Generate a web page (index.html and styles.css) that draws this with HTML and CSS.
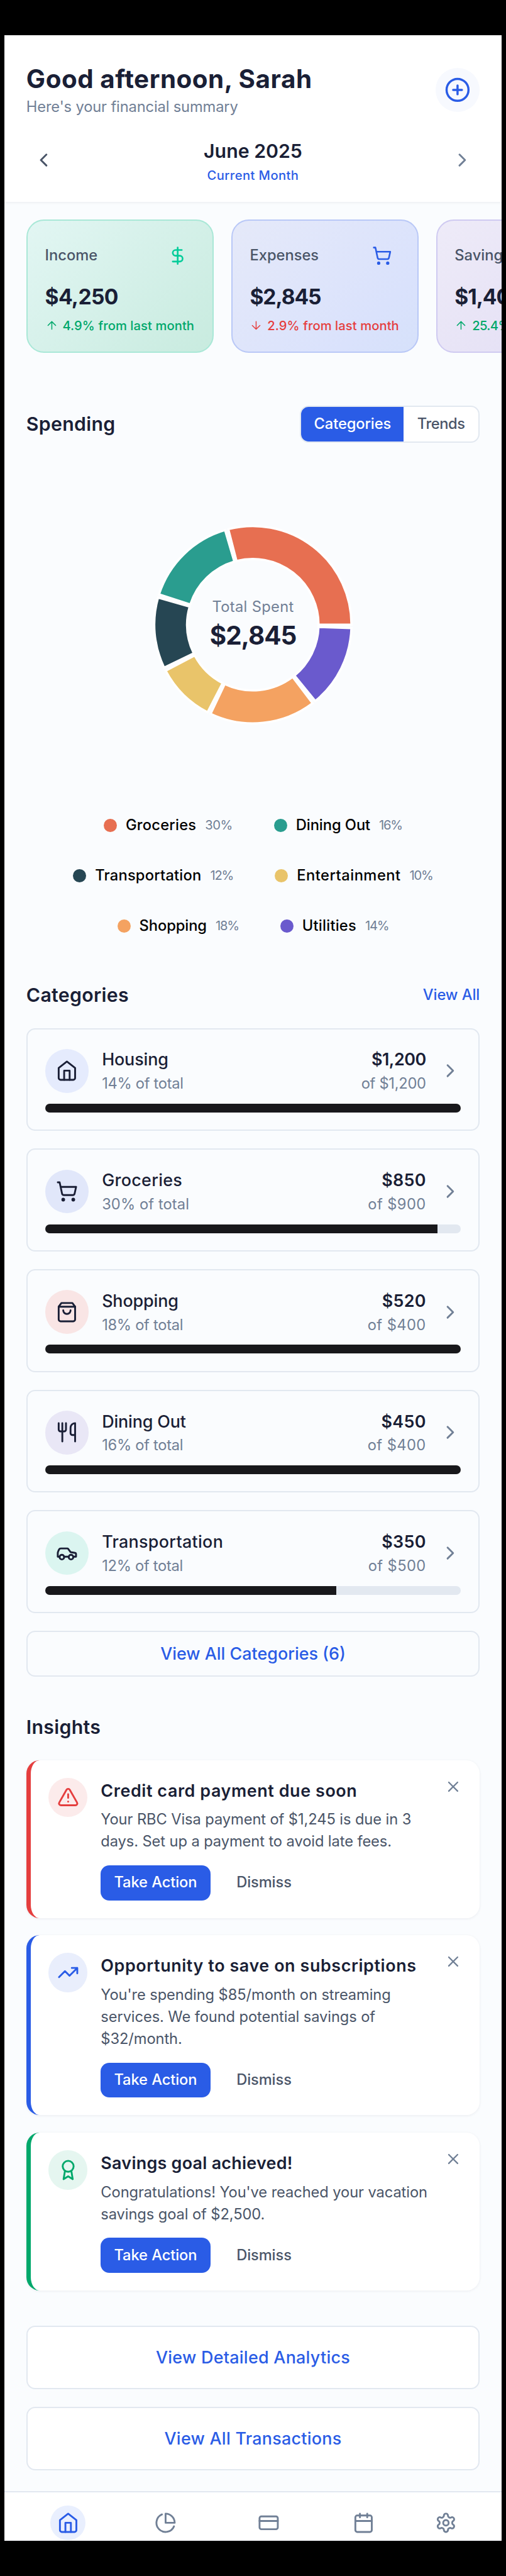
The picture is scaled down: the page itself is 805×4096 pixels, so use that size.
FILE: index.html
```html
<!DOCTYPE html>
<html lang="en">
<head>
<meta charset="utf-8">
<title>Financial summary</title>
<link rel="stylesheet" href="styles.css">
</head>
<body>
<svg class="defs" aria-hidden="true">
  <symbol id="chevron-left" viewBox="0 0 24 24"><path d="m15 18-6-6 6-6"/></symbol>
  <symbol id="chevron-right" viewBox="0 0 24 24"><path d="m9 18 6-6-6-6"/></symbol>
  <symbol id="plus-circle" viewBox="0 0 24 24"><circle cx="12" cy="12" r="10"/><path d="M8 12h8M12 8v8"/></symbol>
  <symbol id="dollar" viewBox="0 0 24 24"><path d="M12 2v20M17 5H9.500a3.500 3.500 0 0 0 0 7h5a3.500 3.500 0 0 1 0 7H6"/></symbol>
  <symbol id="cart" viewBox="0 0 24 24"><circle cx="8" cy="21" r="1"/><circle cx="19" cy="21" r="1"/><path d="M2.050 2.050h2l2.660 12.420a2 2 0 0 0 2 1.580h9.780a2 2 0 0 0 1.950-1.570l1.650-7.430H5.120"/></symbol>
  <symbol id="piggy" viewBox="0 0 24 24"><path d="M3 17l6-6 4 4 8-8M15 7h6v6"/></symbol>
  <symbol id="arrow-up" viewBox="0 0 24 24"><path d="m5 12 7-7 7 7M12 19V5"/></symbol>
  <symbol id="arrow-down" viewBox="0 0 24 24"><path d="M12 5v14M19 12l-7 7-7-7"/></symbol>
  <symbol id="home" viewBox="0 0 24 24"><path d="m3 9 9-7 9 7v11a2 2 0 0 1-2 2H5a2 2 0 0 1-2-2z"/><path d="M9 22V12h6v10"/></symbol>
  <symbol id="bag" viewBox="0 0 24 24"><path d="M6 2 3 6v14a2 2 0 0 0 2 2h14a2 2 0 0 0 2-2V6l-3-4Z"/><path d="M3 6h18M16 10a4 4 0 0 1-8 0"/></symbol>
  <symbol id="utensils" viewBox="0 0 24 24"><path d="M3 2v7c0 1.100.9 2 2 2h4a2 2 0 0 0 2-2V2M7 2v20M21 15V2a5 5 0 0 0-5 5v6c0 1.100.9 2 2 2h3Zm0 0v7"/></symbol>
  <symbol id="car" viewBox="0 0 24 24"><path d="M14 16H9m10 0h3v-3.150a1 1 0 0 0-.84-.99L16 11l-2.700-3.600a1 1 0 0 0-.8-.4H5.240a2 2 0 0 0-1.800 1.100l-.8 1.630A6 6 0 0 0 2 12.420V16h2"/><circle cx="6.500" cy="16.500" r="2.500"/><circle cx="16.500" cy="16.500" r="2.500"/></symbol>
  <symbol id="alert" viewBox="0 0 24 24"><path d="m21.730 18-8-14a2 2 0 0 0-3.480 0l-8 14A2 2 0 0 0 4 21h16a2 2 0 0 0 1.730-3Z"/><path d="M12 9v4M12 17h.01"/></symbol>
  <symbol id="trend" viewBox="0 0 24 24"><path d="m22 7-8.500 8.500-5-5L2 17M16 7h6v6"/></symbol>
  <symbol id="award" viewBox="0 0 24 24"><circle cx="12" cy="8" r="6"/><path d="M15.477 12.890 17 22l-5-3-5 3 1.523-9.110"/></symbol>
  <symbol id="close" viewBox="0 0 24 24"><path d="M18 6 6 18M6 6l12 12"/></symbol>
  <symbol id="pie" viewBox="0 0 24 24"><path d="M21.210 15.890A10 10 0 1 1 8 2.830"/><path d="M22 12A10 10 0 0 0 12 2v10z"/></symbol>
  <symbol id="card" viewBox="0 0 24 24"><rect x="2" y="5" width="20" height="14" rx="2"/><path d="M2 10h20"/></symbol>
  <symbol id="calendar" viewBox="0 0 24 24"><rect x="3" y="4" width="18" height="18" rx="2"/><path d="M16 2v4M8 2v4M3 10h18"/></symbol>
  <symbol id="gear" viewBox="0 0 24 24"><path d="M12.220 2h-.44a2 2 0 0 0-2 2v.18a2 2 0 0 1-1 1.730l-.43.25a2 2 0 0 1-2 0l-.15-.08a2 2 0 0 0-2.730.73l-.22.38a2 2 0 0 0 .73 2.730l.15.1a2 2 0 0 1 1 1.720v.51a2 2 0 0 1-1 1.740l-.15.09a2 2 0 0 0-.73 2.730l.22.38a2 2 0 0 0 2.730.73l.15-.08a2 2 0 0 1 2 0l.43.25a2 2 0 0 1 1 1.730V20a2 2 0 0 0 2 2h.44a2 2 0 0 0 2-2v-.18a2 2 0 0 1 1-1.730l.43-.25a2 2 0 0 1 2 0l.15.08a2 2 0 0 0 2.730-.73l.22-.39a2 2 0 0 0-.73-2.730l-.15-.08a2 2 0 0 1-1-1.740v-.5a2 2 0 0 1 1-1.740l.15-.09a2 2 0 0 0 .73-2.730l-.22-.38a2 2 0 0 0-2.730-.73l-.15.08a2 2 0 0 1-2 0l-.43-.25a2 2 0 0 1-1-1.730V4a2 2 0 0 0-2-2z"/><circle cx="12" cy="12" r="3"/></symbol>
</svg>

<div class="app">
  <header class="header">
    <div class="greeting">
      <div>
        <h1 class="title">Good afternoon, Sarah</h1>
        <p class="subtitle">Here's your financial summary</p>
      </div>
      <button class="add"><svg class="icon i24"><use href="#plus-circle"/></svg></button>
    </div>
    <div class="month">
      <button class="month-btn"><svg class="icon i20"><use href="#chevron-left"/></svg></button>
      <div class="month-label">
        <div class="month-name">June 2025</div>
        <div class="month-note">Current Month</div>
      </div>
      <button class="month-btn next"><svg class="icon i20"><use href="#chevron-right"/></svg></button>
    </div>
  </header>

  <section class="summary">
    <article class="stat income">
      <div class="stat-top"><span class="stat-label">Income</span><span class="stat-icon"><svg class="icon i18"><use href="#dollar"/></svg></span></div>
      <div class="stat-value">$4,250</div>
      <div class="stat-change up"><svg class="icon i12"><use href="#arrow-up"/></svg><span>4.9% from last month</span></div>
    </article>
    <article class="stat expenses">
      <div class="stat-top"><span class="stat-label">Expenses</span><span class="stat-icon"><svg class="icon i18"><use href="#cart"/></svg></span></div>
      <div class="stat-value tight">$2,845</div>
      <div class="stat-change down"><svg class="icon i12"><use href="#arrow-down"/></svg><span>2.9% from last month</span></div>
    </article>
    <article class="stat savings">
      <div class="stat-top"><span class="stat-label">Savings</span><span class="stat-icon"><svg class="icon i18"><use href="#piggy"/></svg></span></div>
      <div class="stat-value tight">$1,405</div>
      <div class="stat-change up"><svg class="icon i12"><use href="#arrow-up"/></svg><span class="slim">25.4% from last month</span></div>
    </article>
  </section>

  <section class="spending">
    <div class="section-head">
      <h2>Spending</h2>
      <div class="toggle"><button class="on">Categories</button><button class="off">Trends</button></div>
    </div>
    <div class="chart">
      <svg class="donut" viewBox="-100 -100 200 200">
        <path fill="#e76f51" d="M90 0A90 90 0 0 0-22.380-87.170L-14.920-58.110A60 60 0 0 1 60 0Z"/>
        <path fill="#2a9d8f" d="M-25.410-86.340A90 90 0 0 0-85.630-27.690L-57.090-18.460A60 60 0 0 1-16.940-57.560Z"/>
        <path fill="#264653" d="M-86.550-24.690A90 90 0 0 0-81 39.230L-54 26.150A60 60 0 0 1-57.700-16.460Z"/>
        <path fill="#e9c46a" d="M-79.580 42.030A90 90 0 0 0-41.360 79.930L-27.570 53.290A60 60 0 0 1-53.060 28.020Z"/>
        <path fill="#f4a261" d="M-38.550 81.330A90 90 0 0 0 54.510 71.610L36.340 47.740A60 60 0 0 1-25.700 54.220Z"/>
        <path fill="#6a5acd" d="M56.980 69.670A90 90 0 0 0 89.950 3.140L59.960 2.090A60 60 0 0 1 37.990 46.440Z"/>
      </svg>
      <div class="total"><span class="total-label">Total Spent</span><span class="total-value">$2,845</span></div>
    </div>
    <div class="legend">
      <div class="legend-row">
        <div class="key"><i class="dot c1"></i><b>Groceries</b><small>30%</small></div>
        <div class="key"><i class="dot c2"></i><b class="flat">Dining Out</b><small class="slim">16%</small></div>
      </div>
      <div class="legend-row">
        <div class="key"><i class="dot c3"></i><b>Transportation</b><small class="slim">12%</small></div>
        <div class="key"><i class="dot c4"></i><b class="loose">Entertainment</b><small class="slim">10%</small></div>
      </div>
      <div class="legend-row">
        <div class="key"><i class="dot c5"></i><b class="flat">Shopping</b><small class="slim">18%</small></div>
        <div class="key"><i class="dot c6"></i><b>Utilities</b><small class="slim">14%</small></div>
      </div>
    </div>
  </section>

  <section class="categories">
    <div class="section-head short"><h2>Categories</h2><a class="link">View All</a></div>
    <article class="cat">
      <div class="cat-row">
        <span class="cat-icon housing"><svg class="icon i20"><use href="#home"/></svg></span>
        <div class="cat-name"><strong class="flat">Housing</strong><span>14% of total</span></div>
        <div class="cat-sum"><strong class="slim">$1,200</strong><span class="flat">of $1,200</span></div>
        <svg class="icon i20 go"><use href="#chevron-right"/></svg>
      </div>
      <div class="bar"><div class="fill" style="width:100%"></div></div>
    </article>
    <article class="cat">
      <div class="cat-row">
        <span class="cat-icon groceries"><svg class="icon i20"><use href="#cart"/></svg></span>
        <div class="cat-name"><strong>Groceries</strong><span class="wide">30% of total</span></div>
        <div class="cat-sum"><strong>$850</strong><span>of $900</span></div>
        <svg class="icon i20 go"><use href="#chevron-right"/></svg>
      </div>
      <div class="bar"><div class="fill" style="width:94.4%"></div></div>
    </article>
    <article class="cat">
      <div class="cat-row">
        <span class="cat-icon shopping"><svg class="icon i20"><use href="#bag"/></svg></span>
        <div class="cat-name"><strong class="flat">Shopping</strong><span>18% of total</span></div>
        <div class="cat-sum"><strong>$520</strong><span>of $400</span></div>
        <svg class="icon i20 go"><use href="#chevron-right"/></svg>
      </div>
      <div class="bar"><div class="fill" style="width:100%"></div></div>
    </article>
    <article class="cat">
      <div class="cat-row">
        <span class="cat-icon dining"><svg class="icon i20"><use href="#utensils"/></svg></span>
        <div class="cat-name"><strong class="flat">Dining Out</strong><span>16% of total</span></div>
        <div class="cat-sum"><strong>$450</strong><span>of $400</span></div>
        <svg class="icon i20 go"><use href="#chevron-right"/></svg>
      </div>
      <div class="bar"><div class="fill" style="width:100%"></div></div>
    </article>
    <article class="cat">
      <div class="cat-row">
        <span class="cat-icon transport"><svg class="icon i20"><use href="#car"/></svg></span>
        <div class="cat-name"><strong>Transportation</strong><span>12% of total</span></div>
        <div class="cat-sum"><strong>$350</strong><span>of $500</span></div>
        <svg class="icon i20 go"><use href="#chevron-right"/></svg>
      </div>
      <div class="bar"><div class="fill" style="width:70%"></div></div>
    </article>
    <button class="all-cats">View All Categories (6)</button>
  </section>

  <section class="insights">
    <h2>Insights</h2>
    <article class="insight danger">
      <span class="badge"><svg class="icon i20"><use href="#alert"/></svg></span>
      <div class="insight-body">
        <h3>Credit card payment due soon</h3>
        <p>Your RBC Visa payment of $1,245 is due in 3<br>days. Set up a payment to avoid late fees.</p>
        <div class="actions"><button class="take">Take Action</button><button class="dismiss">Dismiss</button></div>
      </div>
      <svg class="icon i16 close"><use href="#close"/></svg>
    </article>
    <article class="insight info">
      <span class="badge"><svg class="icon i20"><use href="#trend"/></svg></span>
      <div class="insight-body">
        <h3>Opportunity to save on subscriptions</h3>
        <p>You're spending $85/month on streaming<br>services. We found potential savings of<br>$32/month.</p>
        <div class="actions"><button class="take">Take Action</button><button class="dismiss">Dismiss</button></div>
      </div>
      <svg class="icon i16 close"><use href="#close"/></svg>
    </article>
    <article class="insight success">
      <span class="badge"><svg class="icon i20"><use href="#award"/></svg></span>
      <div class="insight-body">
        <h3 class="snug">Savings goal achieved!</h3>
        <p>Congratulations! You've reached your vacation<br>savings goal of $2,500.</p>
        <div class="actions"><button class="take">Take Action</button><button class="dismiss">Dismiss</button></div>
      </div>
      <svg class="icon i16 close"><use href="#close"/></svg>
    </article>
  </section>

  <section class="shortcuts">
    <button>View Detailed Analytics</button>
    <button>View All Transactions</button>
  </section>

  <nav class="nav">
    <a class="active"><svg class="icon i20"><use href="#home"/></svg></a>
    <a class="n-pie"><svg class="icon i20"><use href="#pie"/></svg></a>
    <a class="n-card"><svg class="icon i20"><use href="#card"/></svg></a>
    <a class="n-cal"><svg class="icon i20"><use href="#calendar"/></svg></a>
    <a class="n-gear"><svg class="icon i20"><use href="#gear"/></svg></a>
  </nav>
</div>
</body>
</html>
```
FILE: styles.css
```css
/* 1rem is ten layout units */
html { font-size: 17.428px; background: #000; }
* { box-sizing: border-box; margin: 0; padding: 0; }
body {
  background: #000;
  padding: 3.2rem 0.4rem 0 0.4rem;
  height: 4096px;
  overflow: hidden;
  font-family: Inter, "Liberation Sans", sans-serif;
  font-size: 1.36rem;
  line-height: 2rem;
  color: #1a1f36;
}
button { font: inherit; letter-spacing: inherit; border: 0; background: none; color: inherit; }
svg { display: block; flex: none; }
.defs { position: absolute; width: 0; height: 0; }
.icon { fill: none; stroke: currentColor; stroke-width: 2; stroke-linecap: round; stroke-linejoin: round; overflow: visible; }
.i12 { width: 1.2rem; height: 1.2rem; }
.i16 { width: 1.6rem; height: 1.6rem; }
.i18 { width: 1.8rem; height: 1.8rem; }
.i20 { width: 2rem; height: 2rem; }
.i24 { width: 2.4rem; height: 2.4rem; }

.app { height: 228.6rem; background: #fafcfe; overflow: hidden; display: flex; flex-direction: column; }
h2 { font-size: 1.737rem; line-height: 2.8rem; font-weight: 600; letter-spacing: 0.01em; }

/* Header */
.header { height: 15.2rem; flex: none; padding: 2.4rem 2rem 0; background: #fff; box-shadow: 0 1px 4px rgba(26, 31, 54, 0.08); }
.greeting { display: flex; justify-content: space-between; align-items: center; height: 5.2rem; }
.title { font-size: 2.316rem; line-height: 3.2rem; font-weight: 700; letter-spacing: 0.013em; }
.subtitle { color: #718096; letter-spacing: -0.006em; }
.add { width: 4rem; height: 4rem; border-radius: 50%; background: #f7f9fe; color: #2a5ce6; display: grid; place-items: center; }
.month { margin-top: 1.6rem; height: 4.4rem; display: flex; justify-content: space-between; align-items: center; text-align: center; }
.month-btn { width: 3.2rem; height: 3.2rem; display: grid; place-items: center; color: #4a5568; }
.month-btn.next { color: #718096; }
.month-name { font-size: 1.737rem; line-height: 2.8rem; font-weight: 600; }
.month-note { font-size: 1.158rem; line-height: 1.6rem; font-weight: 500; letter-spacing: 0.021em; color: #2a5ce6; }

/* Summary cards */
.summary { display: flex; gap: 1.6rem; padding: 1.6rem 0 0 2rem; overflow: hidden; flex: none; }
.stat { flex: none; width: 17.1rem; height: 12.2rem; border: 2px solid; border-radius: 1.6rem; padding: 1.6rem 1.59rem; }
.income { background: linear-gradient(135deg, #e2f6f3, #c8ebdf); border-color: #a9e8d7; }
.expenses { background: linear-gradient(135deg, #e5e9f9, #dae2fc 75%, #d6e1fa); border-color: #b9c8f7; }
.savings { background: linear-gradient(135deg, #eeebf8, #e1dcf4); border-color: #cfcaf1; }
.stat-top { height: 3.2rem; display: flex; justify-content: space-between; align-items: center; }
.stat-label { color: #4a5568; font-weight: 500; letter-spacing: 0; }
.stat-icon { width: 3.2rem; height: 3.2rem; display: grid; place-items: center; }
.income .stat-icon { color: #00cc99; }
.expenses .stat-icon { color: #2a5ce6; }
.savings .stat-icon { color: #6a5acd; }
.stat-value { margin-top: 0.8rem; font-size: 1.93rem; line-height: 2.8rem; font-weight: 700; letter-spacing: -0.019em; }
.stat-value.tight { letter-spacing: -0.032em; }
.stat-change { margin-top: 0.4rem; display: flex; align-items: center; gap: 0.4rem; font-size: 1.158rem; line-height: 1.6rem; font-weight: 500; letter-spacing: 0.004em; white-space: nowrap; }
.stat-change .icon { stroke-width: 1.7; }
.stat-change .slim { letter-spacing: -0.03em; }
.up { color: #00a86b; }
.down { color: #e53e3e; }

/* Spending */
.spending { margin-top: 4.8rem; padding: 0 2rem; flex: none; }
.section-head { display: flex; justify-content: space-between; align-items: center; height: 3.4rem; }
.section-head.short { height: 2.8rem; }
.toggle { width: 16.4rem; height: 3.4rem; display: flex; border: 2px solid #e2e8f0; border-radius: 0.8rem; overflow: hidden; background: #fff; font-weight: 500; }
.on { width: 9.35rem; background: #2a5ce6; color: #fff; letter-spacing: -0.005em; }
.off { flex: 1; color: #4a5568; letter-spacing: -0.018em; }
.chart { margin-top: 1.6rem; height: 30rem; display: grid; place-items: center; }
.donut { grid-area: 1 / 1; width: 20rem; height: 20rem; stroke: #fff; stroke-width: 2; }
.total { grid-area: 1 / 1; display: flex; flex-direction: column; align-items: center; }
.total-label { color: #718096; letter-spacing: 0.014em; }
.total-value { font-size: 2.316rem; line-height: 3.2rem; font-weight: 700; letter-spacing: -0.025em; }
.legend { margin-top: 2.3rem; display: flex; flex-direction: column; gap: 2.6rem; }
.legend-row { height: 2rem; display: flex; justify-content: center; gap: 3.8rem; }
.key { display: flex; align-items: center; gap: 0.8rem; color: #000; }
.key b { font-weight: 500; letter-spacing: 0.009em; }
.key .flat { letter-spacing: -0.003em; }
.key .loose { letter-spacing: 0.021em; }
.key small { font-size: 1.158rem; color: #718096; letter-spacing: -0.025em; }
.key .slim { letter-spacing: -0.06em; }
.dot { width: 1.2rem; height: 1.2rem; border-radius: 50%; }
.c1 { background: #e76f51; }
.c2 { background: #2a9d8f; }
.c3 { background: #264653; }
.c4 { background: #e9c46a; }
.c5 { background: #f4a261; }
.c6 { background: #6a5acd; }

/* Categories */
.categories { margin-top: 3.9rem; padding: 0 2rem; display: flex; flex-direction: column; gap: 1.6rem; flex: none; }
.link { color: #2a5ce6; font-weight: 500; letter-spacing: -0.003em; }
.cat { height: 9.4rem; border: 2px solid #e2e8f0; border-radius: 0.8rem; padding: 1.6rem 1.59rem; }
.cat-row { height: 4.4rem; display: flex; align-items: center; }
.cat-icon { width: 4rem; height: 4rem; border-radius: 50%; display: grid; place-items: center; }
.housing { background: #e5ebfd; }
.groceries { background: #e1e7fa; }
.shopping { background: #f9e5e5; }
.dining { background: #e9e7f6; }
.transport { background: #dbf5f0; }
.cat-name { margin-left: 1.2rem; flex: 1; }
.cat strong { display: block; font-size: 1.544rem; line-height: 2.4rem; font-weight: 500; letter-spacing: 0.011em; }
.cat span { letter-spacing: -0.012em; color: #718096; }
.cat span.wide { letter-spacing: 0.004em; }
.cat .cat-icon { color: #1a1f36; }
.cat strong.flat { letter-spacing: -0.005em; }
.cat-sum { text-align: right; }
.cat .cat-sum strong { font-weight: 600; }
.cat .cat-sum strong.slim { letter-spacing: -0.018em; }
.cat .cat-sum span { letter-spacing: 0.018em; }
.cat .cat-sum span.flat { letter-spacing: -0.012em; }
.go { margin-left: 1.2rem; color: #718096; }
.bar { margin-top: 0.8rem; height: 0.8rem; border-radius: 0.4rem; background: #e2e8f0; overflow: hidden; }
.fill { height: 100%; background: #18181b; }
.all-cats { height: 4.2rem; border: 2px solid #e2e8f0; border-radius: 0.8rem; font-size: 1.544rem; font-weight: 500; color: #2a5ce6; }

/* Insights */
.insights { margin-top: 3.2rem; padding: 0 2rem; display: flex; flex-direction: column; gap: 1.6rem; flex: none; }
.insight { display: flex; align-items: flex-start; padding: 1.6rem; border-left: 7px solid; border-radius: 1.2rem; background: #fff; box-shadow: 0 1px 4px rgba(26, 31, 54, 0.07); }
.danger { border-color: #e53e3e; }
.info { border-color: #2a5ce6; }
.success { border-color: #00a86b; }
.badge { width: 3.6rem; height: 3.6rem; border-radius: 50%; display: grid; place-items: center; flex: none; }
.danger .badge { background: #fcebeb; color: #e53e3e; }
.info .badge { background: #e9eefc; color: #2a5ce6; }
.success .badge { background: #e5f6f0; color: #00a86b; }
.insight-body { margin-left: 1.2rem; flex: 1; }
.insight h3 { font-size: 1.544rem; line-height: 2.4rem; font-weight: 600; letter-spacing: 0.022em; white-space: nowrap; }
.insight h3.snug { letter-spacing: 0.01em; }
.insight p { padding-top: 0.45rem; margin-bottom: -0.05rem; color: #4a5568; letter-spacing: -0.004em; white-space: nowrap; }
.actions { margin-top: 1.2rem; display: flex; font-weight: 500; letter-spacing: -0.004em; }
.take { width: 10rem; height: 3.2rem; border-radius: 0.8rem; background: #2a5ce6; color: #fff; }
.dismiss { width: 9.8rem; color: #4a5568; }
.close { color: #718096; }

/* Shortcuts */
.shortcuts { margin-top: 3.2rem; padding: 0 2rem; display: flex; flex-direction: column; gap: 1.6rem; flex: none; }
.shortcuts button { height: 5.8rem; border: 2px solid #e2e8f0; border-radius: 0.8rem; background: #fff; font-size: 1.544rem; font-weight: 500; letter-spacing: 0.01em; color: #2a5ce6; }

/* Bottom navigation */
.nav { margin-top: 1.9rem; height: 4.5rem; flex: none; border-top: 2px solid #e2e8f0; background: #fff; display: flex; align-items: flex-end; padding-left: 4.2rem; color: #718096; }
.nav a { width: 3.2rem; height: 3.2rem; display: grid; place-items: center; }
.nav .active { border-radius: 50%; background: #e9effe; color: #2a5ce6; }
.nav .n-pie { margin-left: 5.7rem; }
.nav .n-card { margin-left: 6.2rem; }
.nav .n-cal { margin-left: 5.5rem; }
.nav .n-gear { margin-left: 4.3rem; }
```
